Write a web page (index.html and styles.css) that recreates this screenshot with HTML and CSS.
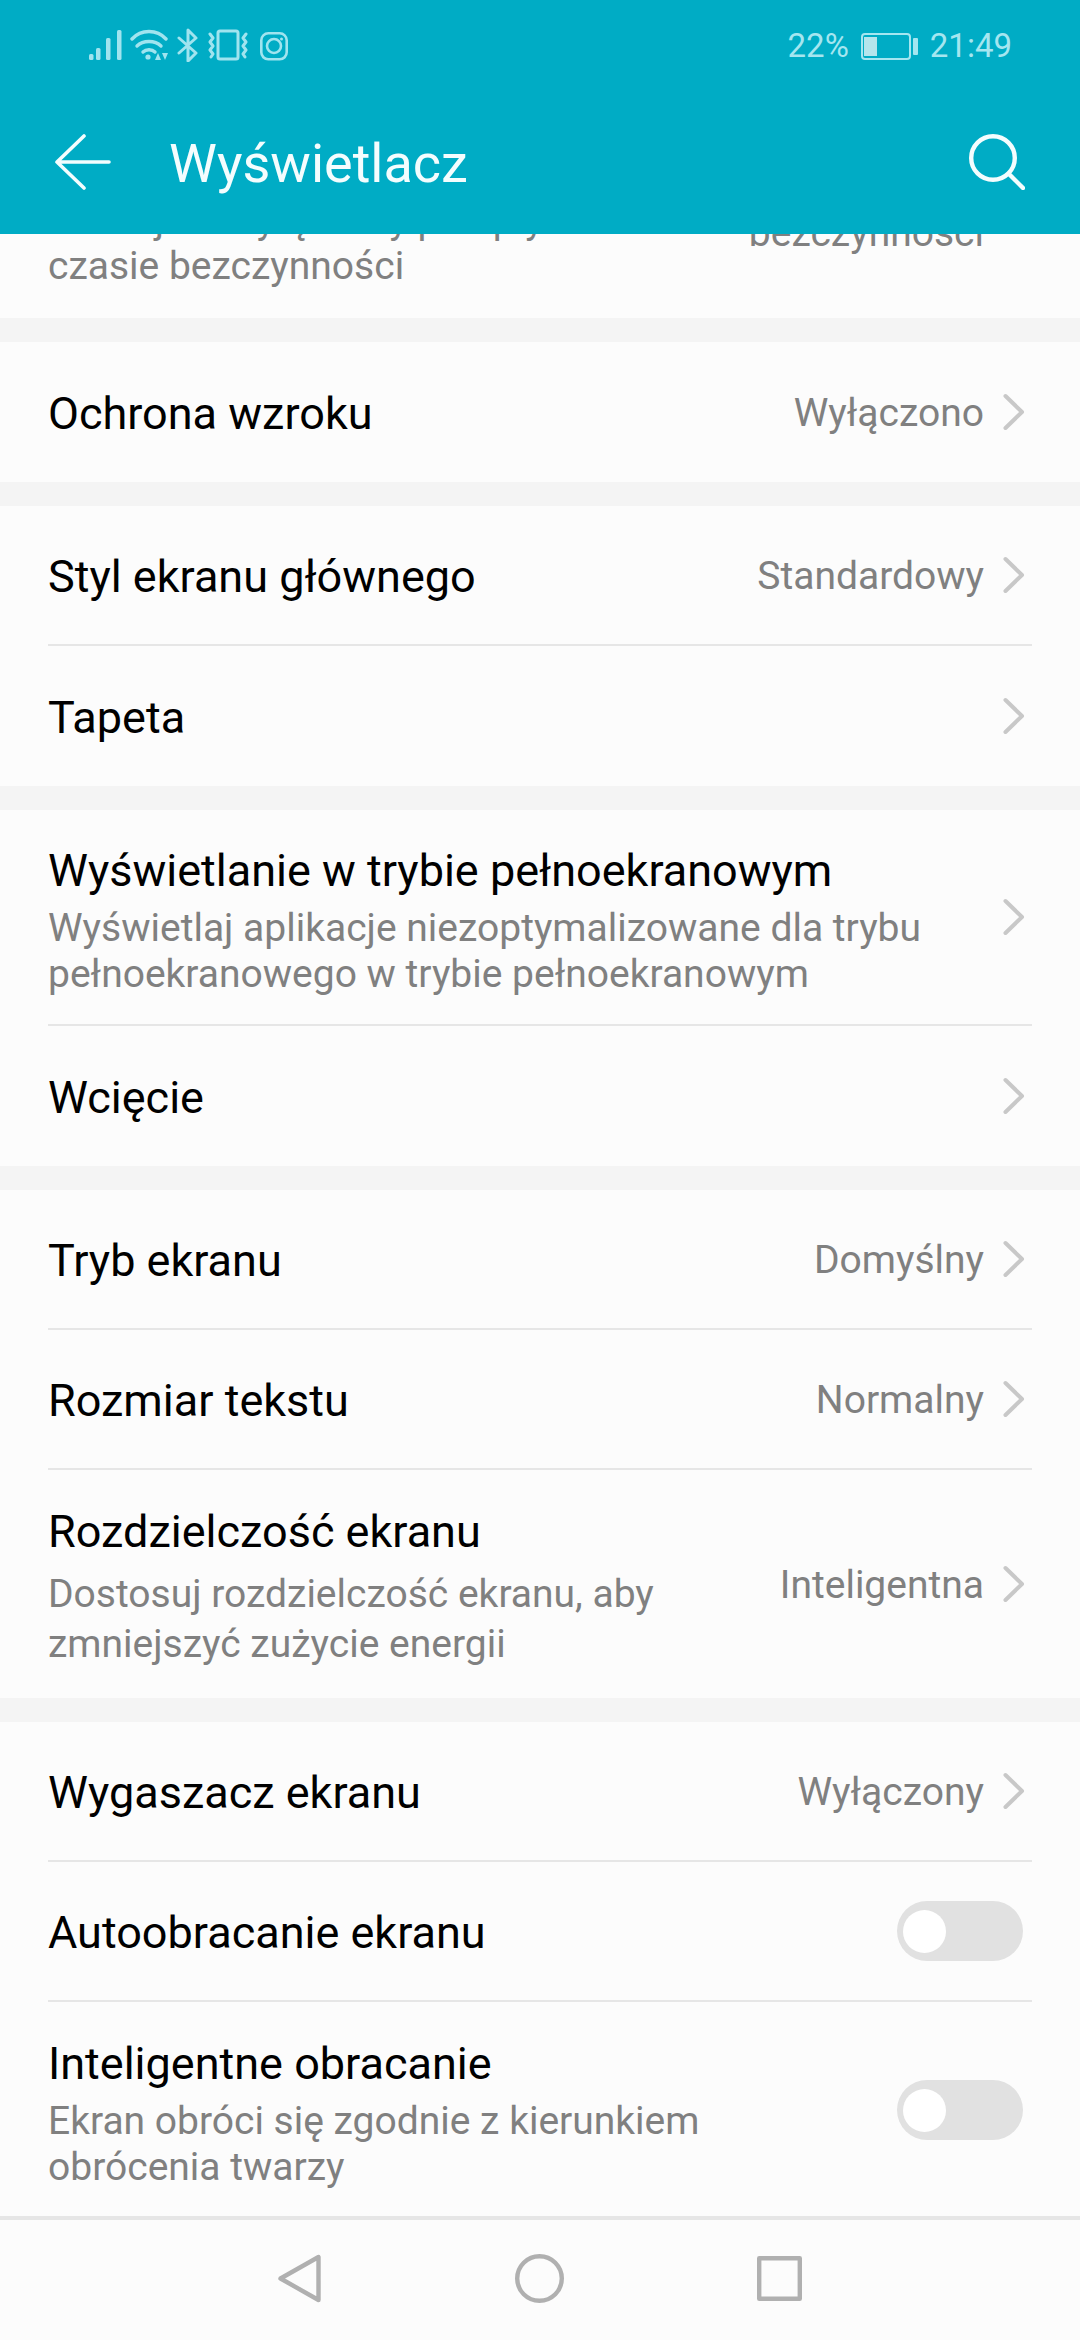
FILE: index.html
```html
<!DOCTYPE html>
<html lang="pl">
<head>
    <meta charset="UTF-8">
    <meta name="viewport" content="width=device-width, initial-scale=1.0">
    <title>Wyświetlacz</title>
    <link rel="stylesheet" href="styles.css">
</head>
<body>
    <!-- Status bar and title -->
    <header class="app-header">
        <div class="status-bar">
            <div class="status-icons">
                <svg class="icon-signal" width="41" height="34" viewBox="0 0 41 34" fill="#a0e4ef"><rect x="0" y="26" width="4.500" height="6" rx="1.500"/><rect x="7" y="20" width="4.500" height="12" rx="1.500"/><rect x="17" y="10" width="4.500" height="22" rx="1.500"/><rect x="28" y="2" width="4.500" height="30" rx="1.500"/></svg>
                <svg class="icon-wifi" width="47" height="34" viewBox="0 0 47 34" fill="none" stroke="#a0e4ef" stroke-width="3.400" stroke-linecap="round"><path d="M2 11C11 1 27 1 36 11"/><path d="M7 18c6-6 18-6 24 0"/><path d="M13 24c3-3 9-3 12 0"/><circle cx="18" cy="29" r="2.600" fill="#a0e4ef" stroke="none"/><path d="M25 32h6l-3-7zM32 25h6l-3 7z" fill="#a0e4ef" stroke="none"/></svg>
                <svg class="icon-bt" width="31" height="34" viewBox="0 0 31 34" fill="none" stroke="#a0e4ef" stroke-width="3" stroke-linecap="round" stroke-linejoin="round"><path d="M2 10l17 15-8 8V2l8 8L2 25"/></svg>
                <svg class="icon-vibrate" width="52" height="34" viewBox="0 0 52 34" fill="none" stroke="#a0e4ef" stroke-width="3" stroke-linecap="round" stroke-linejoin="round"><rect x="10" y="3" width="20" height="28" rx="2"/><path d="M2 6l3 4-3 4 3 4-3 4 3 4-2 3M38 6l-3 4 3 4-3 4 3 4-3 4 2 3"/></svg>
                <svg class="icon-insta" width="28" height="34" viewBox="0 0 28 34" fill="none" stroke="#a0e4ef" stroke-width="2.600"><rect x="1.300" y="5.300" width="25.400" height="26" rx="7"/><circle cx="14" cy="18" r="7"/><circle cx="21.500" cy="11" r="1.500" fill="#a0e4ef" stroke="none"/></svg>
            </div>
            <div class="status-right">
                <span>22%</span>
                <div class="battery">
                    <div class="battery-body"><div class="battery-level"></div></div>
                    <div class="battery-tip"></div>
                </div>
                <span>21:49</span>
            </div>
        </div>
        <div class="title-bar">
            <svg class="back" width="56" height="56" viewBox="0 0 56 56" fill="none" stroke="#f4fdfe" stroke-width="3.600" stroke-linecap="round" stroke-linejoin="round"><path d="M29 2L2 28l27 26M2 28h52"/></svg>
            <h1>Wyświetlacz</h1>
            <svg class="search" width="56" height="56" viewBox="0 0 56 56" fill="none" stroke="#f4fdfe" stroke-width="4.400" stroke-linecap="round"><circle cx="24" cy="24" r="21.800"/><path d="M41 41l13 13"/></svg>
        </div>
    </header>

    <main class="settings">
        <!-- first card is scrolled under the header -->
        <section class="card card-clipped">
            <div class="clipped-row">
                <p class="sub">Ekran jest wyłączany po upływie limitu w<br>czasie bezczynności</p>
                <span class="value clipped-value">bezczynności</span>
            </div>
        </section>

        <section class="card">
            <div class="row">
                <span class="title">Ochrona wzroku</span>
                <span class="value">Wyłączono</span>
                <svg class="chev" width="24" height="40" viewBox="0 0 24 40"><path d="M3.500 4L20 20 3.500 36"/></svg>
            </div>
        </section>

        <section class="card">
            <div class="row">
                <span class="title">Styl ekranu głównego</span>
                <span class="value">Standardowy</span>
                <svg class="chev" width="24" height="40" viewBox="0 0 24 40"><path d="M3.500 4L20 20 3.500 36"/></svg>
            </div>
            <div class="row">
                <span class="title">Tapeta</span>
                <svg class="chev" width="24" height="40" viewBox="0 0 24 40"><path d="M3.500 4L20 20 3.500 36"/></svg>
            </div>
        </section>

        <section class="card">
            <div class="row row-tall">
                <div class="text">
                    <span class="title">Wyświetlanie w trybie pełnoekranowym</span>
                    <p class="sub">Wyświetlaj aplikacje niezoptymalizowane dla trybu pełnoekranowego w trybie pełnoekranowym</p>
                </div>
                <svg class="chev" width="24" height="40" viewBox="0 0 24 40"><path d="M3.500 4L20 20 3.500 36"/></svg>
            </div>
            <div class="row">
                <span class="title">Wcięcie</span>
                <svg class="chev" width="24" height="40" viewBox="0 0 24 40"><path d="M3.500 4L20 20 3.500 36"/></svg>
            </div>
        </section>

        <section class="card">
            <div class="row">
                <span class="title">Tryb ekranu</span>
                <span class="value">Domyślny</span>
                <svg class="chev" width="24" height="40" viewBox="0 0 24 40"><path d="M3.500 4L20 20 3.500 36"/></svg>
            </div>
            <div class="row">
                <span class="title">Rozmiar tekstu</span>
                <span class="value">Normalny</span>
                <svg class="chev" width="24" height="40" viewBox="0 0 24 40"><path d="M3.500 4L20 20 3.500 36"/></svg>
            </div>
            <div class="row row-res">
                <div class="text text-narrow">
                    <span class="title">Rozdzielczość ekranu</span>
                    <p class="sub sub-loose">Dostosuj rozdzielczość ekranu, aby zmniejszyć zużycie energii</p>
                </div>
                <span class="value">Inteligentna</span>
                <svg class="chev" width="24" height="40" viewBox="0 0 24 40"><path d="M3.500 4L20 20 3.500 36"/></svg>
            </div>
        </section>

        <section class="card">
            <div class="row">
                <span class="title">Wygaszacz ekranu</span>
                <span class="value">Wyłączony</span>
                <svg class="chev" width="24" height="40" viewBox="0 0 24 40"><path d="M3.500 4L20 20 3.500 36"/></svg>
            </div>
            <div class="row">
                <span class="title">Autoobracanie ekranu</span>
                <div class="switch"><div class="knob"></div></div>
            </div>
            <div class="row row-tall">
                <div class="text text-narrow">
                    <span class="title">Inteligentne obracanie</span>
                    <p class="sub">Ekran obróci się zgodnie z kierunkiem obrócenia twarzy</p>
                </div>
                <div class="switch"><div class="knob"></div></div>
            </div>
        </section>
    </main>

    <nav class="nav-bar">
        <svg width="49" height="49" viewBox="0 0 49 49" fill="none" stroke="#b0b0b0" stroke-width="4.400" stroke-linejoin="round"><path d="M43.500 3v43L5.500 24.500z"/></svg>
        <svg width="49" height="49" viewBox="0 0 49 49" fill="none" stroke="#b0b0b0" stroke-width="4.400"><circle cx="24.500" cy="24.500" r="22.300"/></svg>
        <svg width="49" height="49" viewBox="0 0 49 49" fill="none" stroke="#b0b0b0" stroke-width="4.400" stroke-linejoin="round"><rect x="4.200" y="4.200" width="40.600" height="40.600"/></svg>
    </nav>
</body>
</html>
```

FILE: styles.css
```css
/* Basic Reset */
* {
    margin: 0;
    padding: 0;
    box-sizing: border-box;
}

body {
    width: 1080px;
    height: 2340px;
    font-family: 'Roboto', sans-serif;
    background-color: #f4f4f4;
    display: flex;
    flex-direction: column;
    overflow: hidden;
}

/* Header */
.app-header {
    height: 234px;
    flex-shrink: 0;
    background-color: #00acc5;
    color: #f4fdfe;
}

.status-bar {
    height: 90px;
    padding: 26px 68px 0 89px;
    display: flex;
    justify-content: space-between;
    align-items: flex-start;
}

.status-icons {
    display: flex;
    margin-top: 2px;
}

.status-right {
    display: flex;
    align-items: center;
    gap: 12px;
    font-size: 33px;
    line-height: 40px;
    color: #a5e6f0;
}

.battery {
    display: flex;
    align-items: center;
    gap: 2px;
}

.battery-body {
    width: 50px;
    height: 27px;
    border: 2px solid #a5e6f0;
    border-radius: 4px;
    padding: 2px 1px;
}

.battery-level {
    width: 13px;
    height: 100%;
    background-color: #b5e5ec;
}

.battery-tip {
    width: 5px;
    height: 17px;
    background-color: #a5e6f0;
    border-radius: 1px;
}

.title-bar {
    height: 144px;
    padding: 44px 55px 0 55px;
    display: flex;
    align-items: flex-start;
}

.title-bar h1 {
    flex: 1;
    margin-left: 58px;
    font-size: 54px;
    font-weight: 400;
    line-height: 60px;
}

/* Settings list */
.settings {
    flex: 1;
    overflow: hidden;
    display: flex;
    flex-direction: column;
    gap: 24px;
}

.card {
    flex-shrink: 0;
    background-color: #fcfcfc;
    padding-left: 48px;
    padding-right: 48px;
}

.card-clipped {
    height: 84px;
    overflow: hidden;
    display: flex;
    align-items: flex-end;
}

.clipped-row {
    width: 100%;
    padding-bottom: 29px;
    display: flex;
    justify-content: space-between;
    align-items: flex-start;
}

.clipped-row .sub {
    white-space: nowrap;
}

.clipped-row .clipped-value {
    padding-top: 0;
    margin: 13px 48px 0 0;
}

.row {
    height: 140px;
    display: flex;
    align-items: center;
    border-bottom: 2px solid #e6e6e6;
}

.row:last-child {
    border-bottom: none;
}

.row-tall {
    height: 216px;
}

.row-res {
    height: 228px;
}

.text {
    flex: 1;
    padding-top: 8px;
    display: flex;
    flex-direction: column;
}

.text-narrow {
    padding-right: 60px;
}

.title {
    flex: 1;
    padding-top: 4px;
    font-size: 45px;
    line-height: 50px;
    color: #000;
    white-space: nowrap;
}

.text .title {
    flex: none;
    padding-top: 0;
    margin-bottom: 9px;
}

.sub {
    font-size: 39px;
    line-height: 46px;
    color: #808080;
}

.sub-loose {
    line-height: 50px;
    margin-top: 3px;
}

.value {
    padding-top: 2px;
    font-size: 39px;
    line-height: 46px;
    color: #808080;
    white-space: nowrap;
}

.chev {
    margin: 0 6px 0 18px;
    flex-shrink: 0;
    fill: none;
    stroke: #c8c8c8;
    stroke-width: 4;
    stroke-linecap: round;
    stroke-linejoin: round;
}

.switch {
    width: 126px;
    height: 60px;
    margin-right: 9px;
    flex-shrink: 0;
    border-radius: 30px;
    background-color: #e1e1e1;
    padding: 9px 6px;
}

.knob {
    width: 43px;
    height: 43px;
    border-radius: 50%;
    background-color: #fff;
}

/* Bottom navigation */
.nav-bar {
    height: 124px;
    flex-shrink: 0;
    background-color: #fcfcfc;
    border-top: 4px solid #e6e6e6;
    padding: 34px 0 0 275px;
    display: flex;
    align-items: flex-start;
    gap: 191px;
}
```
